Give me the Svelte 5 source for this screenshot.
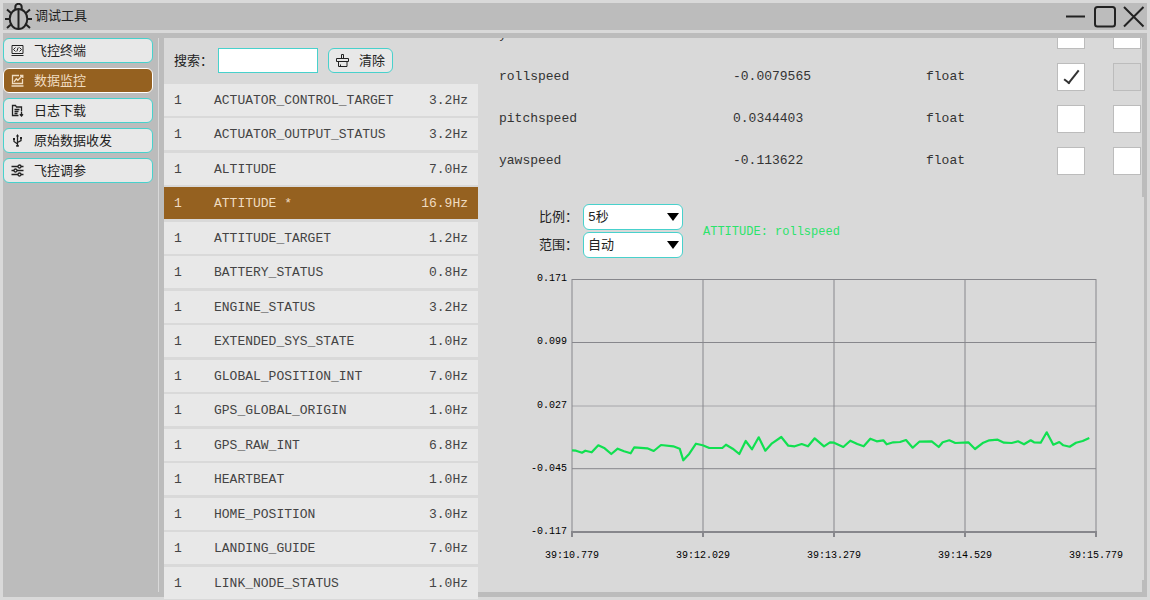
<script lang="ts">
  const tools = [
    { id: 'terminal', label: '飞控终端' },
    { id: 'monitor', label: '数据监控' },
    { id: 'log', label: '日志下载' },
    { id: 'raw', label: '原始数据收发' },
    { id: 'params', label: '飞控调参' },
  ];

  const messages = [
    { sys: 1, name: 'ACTUATOR_CONTROL_TARGET', rate: '3.2Hz' },
    { sys: 1, name: 'ACTUATOR_OUTPUT_STATUS', rate: '3.2Hz' },
    { sys: 1, name: 'ALTITUDE', rate: '7.0Hz' },
    { sys: 1, name: 'ATTITUDE *', rate: '16.9Hz' },
    { sys: 1, name: 'ATTITUDE_TARGET', rate: '1.2Hz' },
    { sys: 1, name: 'BATTERY_STATUS', rate: '0.8Hz' },
    { sys: 1, name: 'ENGINE_STATUS', rate: '3.2Hz' },
    { sys: 1, name: 'EXTENDED_SYS_STATE', rate: '1.0Hz' },
    { sys: 1, name: 'GLOBAL_POSITION_INT', rate: '7.0Hz' },
    { sys: 1, name: 'GPS_GLOBAL_ORIGIN', rate: '1.0Hz' },
    { sys: 1, name: 'GPS_RAW_INT', rate: '6.8Hz' },
    { sys: 1, name: 'HEARTBEAT', rate: '1.0Hz' },
    { sys: 1, name: 'HOME_POSITION', rate: '3.0Hz' },
    { sys: 1, name: 'LANDING_GUIDE', rate: '7.0Hz' },
    { sys: 1, name: 'LINK_NODE_STATUS', rate: '1.0Hz' },
  ];

  const yTicks = ['0.171', '0.099', '0.027', '-0.045', '-0.117'];
  const xTicks = ['39:10.779', '39:12.029', '39:13.279', '39:14.529', '39:15.779'];

  const samples = [
    [0, 171.3], [4, 171.7], [10, 173.7], [13.3, 171.7], [19.7, 173.3], [26.3, 166.3], [32.7, 169.3],
    [39.3, 175], [45.7, 169.7], [52, 172.3], [58.7, 174.3], [62.3, 168.3], [75.3, 169.3], [81.7, 172],
    [89, 166], [101.3, 167.3], [107.7, 169.7], [111.3, 181.3], [117.3, 174.7], [124, 164.7],
    [130.7, 166.3], [137.3, 169], [150.3, 169], [154, 165.7], [160.7, 169.7], [167.3, 175],
    [173.7, 162], [180, 170.3], [186.7, 158.3], [193.3, 171.7], [200, 164.3], [209.3, 158],
    [216.3, 166.7], [222.7, 167.3], [229.7, 165], [236, 167.3], [242.7, 159.3], [252, 167.3],
    [258, 163.3], [262, 163.7], [271.3, 168], [278.3, 161.7], [285.3, 165], [291.7, 167.3],
    [298.3, 159.7], [304.7, 162.3], [311.3, 161.3], [314.7, 165.3], [321.3, 163.3], [328, 163],
    [334, 161], [340.7, 168.7], [347.3, 162.7], [359.7, 162.3], [366.7, 168], [370.7, 163.3],
    [377.3, 161.3], [383.3, 164], [396.3, 163.3], [403, 170], [411.3, 163.7], [417.3, 161.3],
    [425.7, 160.7], [432, 163.7], [439.7, 164], [446, 162.3], [452, 165.3], [458.7, 161.3],
    [462, 163.3], [468.7, 163.7], [474.7, 153.3], [481.3, 165.7], [487.3, 163], [491.3, 166.3],
    [497.7, 167.7], [504, 163.7], [510.7, 162], [517.3, 159],
  ];

  let activeTool = $state('monitor');
  let selected = $state('ATTITUDE *');
  let search = $state('');
  let scale = $state('5秒');
  let range = $state('自动');

  let fields = $state([
    { name: 'yaw', value: '0.03221', type: 'float', plotA: false, plotB: false, locked: false },
    { name: 'rollspeed', value: '-0.0079565', type: 'float', plotA: true, plotB: false, locked: true },
    { name: 'pitchspeed', value: '0.0344403', type: 'float', plotA: false, plotB: false, locked: false },
    { name: 'yawspeed', value: '-0.113622', type: 'float', plotA: false, plotB: false, locked: false },
  ]);

  const visible = $derived(messages.filter((m) => m.name.includes(search.toUpperCase())));
  const line = samples.map((p) => p.join(',')).join(' ');
</script>

<div class="window">
  <header class="titlebar">
    <svg class="bug" viewBox="0 0 27 27" aria-hidden="true">
      <ellipse cx="13.5" cy="16" rx="8.8" ry="10" />
      <path d="M13.5 6v20M10.3 6.2V4a3.2 3.2 0 0 1 6.4 0v2.2M0 16h4.5M22.5 16H27M2 6.500l4.500 4M25 6.500l-4.500 4M2 25l4.500-4M25 25l-4.500-4" />
    </svg>
    <h1>调试工具</h1>
    <button class="win-btn" aria-label="最小化">
      <svg viewBox="0 0 27 27"><path d="M4 13.5h19" /></svg>
    </button>
    <button class="win-btn" aria-label="最大化">
      <svg viewBox="0 0 27 27"><rect x="4" y="4" width="20" height="19.5" rx="2.5" /></svg>
    </button>
    <button class="win-btn" aria-label="关闭">
      <svg viewBox="0 0 27 27"><path d="m4 4 19.5 19.5M23.5 4 4 23.5" /></svg>
    </button>
  </header>

  <main>
    <nav class="sidebar">
      {#each tools as tool}
        <button class="tool" class:active={tool.id === activeTool} onclick={() => (activeTool = tool.id)}>
          <svg class="icon" viewBox="0 0 13 13" aria-hidden="true">
            {#if tool.id === 'terminal'}
              <path d="M1 1.500h11v8H1zM.5 11.500h12M4.500 3.500l-2 2 2 2M8.500 3.500l2 2-2 2M7.200 3.500 5.800 7.500" />
            {:else if tool.id === 'monitor'}
              <path class="bold" d="M8 1.500H1.500v8h10V5M.5 12h12M3 7.800l2.300-3 1.500 1.500L11.500 1.500M9 1.500h2.800v2.500" />
            {:else if tool.id === 'log'}
              <path class="bold" d="M7.500 11.500H1.500v-10h3l1 1.500h5v4M3.500 5.500h5M3.500 7.500h4M3.500 9.500h3M10.500 7.500v4.500M8.800 10.300l1.700 1.700 1.500-1.700" />
            {:else if tool.id === 'raw'}
              <path class="bold" d="M6.500 1v11M6.500 10 3 7.500V5.500M6.500 8.500 10 6.500V4.500" />
              <path class="solid" d="m6.500 0 1.500 2.500H5zM2 4h2v2H2zM9 3h2v2H9zM5.200 11h2.600v1.800H5.200z" />
            {:else}
              <g class="bold">
                <path d="M.5 2.500H7M10 2.500h2.500M.5 6.500H3M6 6.500h6.500M.5 10.500H7M10 10.500h2.500" />
                <circle cx="8.5" cy="2.5" r="1.5" /><circle cx="4.5" cy="6.5" r="1.5" /><circle cx="8.5" cy="10.5" r="1.5" />
              </g>
            {/if}
          </svg>
          <span>{tool.label}</span>
        </button>
      {/each}
    </nav>

    <section class="messages">
      <div class="toolbar">
        <label for="search">搜索：</label>
        <input id="search" type="text" bind:value={search} />
        <button class="clear" onclick={() => (search = '')}>
          <svg class="icon" viewBox="0 0 13 13" aria-hidden="true">
            <path d="M5.500 4.500v-4h2v4M.5 7.500v-3h12v3zM2.500 7.500v5h8.500v-5M4.500 12.500v-2" />
          </svg>
          <span>清除</span>
        </button>
      </div>
      <ul>
        {#each visible as msg}
          <li>
            <button class="message" class:active={msg.name === selected} onclick={() => (selected = msg.name)}>
              <span>{msg.sys}</span>
              <span>{msg.name}</span>
              <span>{msg.rate}</span>
            </button>
          </li>
        {/each}
      </ul>
    </section>

    <section class="detail">
      <div class="fields">
        <table>
          <tbody>
            {#each fields as field}
              <tr>
                <td>{field.name}</td>
                <td class="value">{field.value}</td>
                <td class="type">{field.type}</td>
                <td class="check">
                  <input type="checkbox" aria-label={`${field.name} 1`} bind:checked={field.plotA} />
                </td>
                <td class="check-last">
                  <input type="checkbox" aria-label={`${field.name} 2`} disabled={field.locked} bind:checked={field.plotB} />
                </td>
              </tr>
            {/each}
          </tbody>
        </table>
      </div>

      <div class="options">
        <div class="selects">
          <label for="scale">比例：</label>
          <div class="select">
            <select id="scale" bind:value={scale}>
              <option>5秒</option>
              <option>10秒</option>
              <option>30秒</option>
            </select>
          </div>
          <label for="range">范围：</label>
          <div class="select">
            <select id="range" bind:value={range}>
              <option>自动</option>
              <option>手动</option>
            </select>
          </div>
        </div>
        <span class="legend">ATTITUDE: rollspeed</span>
      </div>

      <div class="chart">
        <div class="y-axis">
          {#each yTicks as tick}<span>{tick}</span>{/each}
        </div>
        <svg class="plot" viewBox="0 0 524 258" preserveAspectRatio="none" role="img" aria-label="ATTITUDE: rollspeed">
          {#each xTicks as _, i}
            <path class="grid" d={`M${i * 131} 0V253`} />
            <path class="axis" d={`M${i * 131} 253v5`} />
          {/each}
          <path class="grid" d="M0 .5h524M0 63.500h524M0 189.700h524" />
          <path class="grid faint" d="M0 127h524" />
          <path class="axis" d="M-1 253h526" />
          <polyline points={line} />
        </svg>
        <div class="x-axis">
          {#each xTicks as tick}<span>{tick}</span>{/each}
        </div>
      </div>
    </section>

    <div class="scrollbar"><div class="thumb"></div></div>
  </main>
</div>

<style>
  :global(body) {
    background: #d9d9d9;
    overflow: hidden;
  }

  .window {
    --panel: #d9d9d9;
    --frame: #bcbcbc;
    --item: #e8e8e8;
    --accent: #48d1cc;
    --active: #956120;
    --ink: #222;
    display: flex;
    flex-direction: column;
    gap: 3px;
    box-sizing: border-box;
    height: 100vh;
    padding: 3px;
    background: var(--panel);
    color: var(--ink);
    font: 13px/16px 'Liberation Mono', 'Noto Sans CJK SC', monospace;
  }

  button,
  input,
  select {
    box-sizing: border-box;
    margin: 0;
    color: inherit;
    font: inherit;
  }

  svg {
    display: block;
    fill: none;
    stroke: currentColor;
  }

  .titlebar {
    display: flex;
    flex: none;
    align-items: center;
    gap: 2px;
    height: 27px;
    padding-left: 2px;
    background: var(--frame);
  }

  .bug {
    width: 27px;
    height: 27px;
    stroke-width: 2;
  }

  h1 {
    flex: 1;
    margin: 0;
    padding-left: 1px;
    font: inherit;
  }

  .win-btn {
    width: 27px;
    height: 27px;
    padding: 0;
    border: 0;
    background: none;
  }

  .win-btn svg {
    stroke-width: 2;
  }

  main {
    display: flex;
    flex: 1;
    min-height: 0;
    box-sizing: border-box;
    padding: 5px 3px 5px 0;
    background: var(--frame);
  }

  .sidebar {
    display: flex;
    flex: none;
    flex-direction: column;
    gap: 5px;
    margin-right: 5px;
    padding-right: 5px;
    border-right: 1px solid var(--panel);
  }

  .tool,
  .clear {
    display: flex;
    align-items: center;
    gap: 10px;
    height: 25px;
    padding: 0 7px;
    border: 1px solid var(--accent);
    border-radius: 6px;
    background: var(--item);
  }

  .tool {
    width: 150px;
  }

  .icon {
    width: 13px;
    height: 13px;
  }

  .bold {
    stroke-width: 1.3;
  }

  .solid {
    fill: currentColor;
    stroke: none;
  }

  .tool.active,
  .message.active {
    border-color: #fff;
    background: var(--active);
    color: #f0dcc0;
  }

  .messages {
    flex: none;
    width: 314px;
    background: var(--panel);
  }

  .toolbar {
    display: flex;
    align-items: center;
    padding: 10px 10px 11px;
  }

  .toolbar input {
    width: 100px;
    height: 25px;
    margin: 0 10px 0 5px;
    border: 1px solid var(--accent);
    background: #fff;
  }

  label,
  .tool span,
  .clear span {
    padding-top: 2px;
  }

  ul {
    margin: 0;
    padding: 0;
    list-style: none;
    background: var(--panel);
  }

  li {
    margin-bottom: 2px;
  }

  li:nth-child(even) {
    margin-bottom: 3px;
  }

  .message {
    display: grid;
    grid-template-columns: 40px 1fr auto;
    align-items: center;
    width: 100%;
    height: 32px;
    padding: 2px 10px 0;
    border: 0;
    background: var(--item);
    color: #444;
    text-align: left;
  }

  .detail {
    flex: 1;
    min-width: 0;
    background: var(--panel);
  }

  .fields {
    display: flex;
    align-items: flex-end;
    box-sizing: border-box;
    height: 159px;
    padding: 0 0 15px 21px;
    overflow: hidden;
    color: #333;
  }

  table {
    width: 100%;
    border-collapse: collapse;
    table-layout: fixed;
  }

  td {
    height: 42px;
    padding: 0;
  }

  .value {
    width: 193px;
  }

  .type {
    width: 131px;
  }

  .check {
    width: 56px;
  }

  .check-last {
    width: 29px;
  }

  td input {
    display: grid;
    width: 28px;
    height: 28px;
    appearance: none;
    border: 1px solid var(--frame);
    background: #fff;
    place-items: center;
  }

  td input:disabled {
    background: #d6d6d6;
  }

  td input:checked::after {
    width: 5px;
    height: 15px;
    margin-bottom: 4px;
    border: solid #333;
    border-width: 0 2px 2px 0;
    content: '';
    transform: rotate(38deg);
  }

  .options {
    display: flex;
    align-items: center;
    gap: 20px;
    padding: 7px 0 0 61px;
  }

  .selects {
    display: grid;
    grid-template-columns: auto 100px;
    align-items: center;
    gap: 2px 5px;
  }

  .select {
    display: grid;
    align-items: center;
  }

  .select::after {
    grid-area: 1 / 1;
    justify-self: end;
    margin-right: 4px;
    border: 6px solid transparent;
    border-top: 8px solid #000;
    border-bottom: 0;
    content: '';
    pointer-events: none;
  }

  select {
    grid-area: 1 / 1;
    width: 100%;
    height: 26px;
    padding: 2px 4px 0;
    appearance: none;
    border: 1px solid var(--accent);
    border-radius: 6px;
    background: #fff;
  }

  .legend {
    padding-top: 2px;
    color: #2be36b;
    font-size: 12px;
  }

  .chart {
    display: grid;
    grid-template-columns: 44px 1fr;
    column-gap: 5px;
    padding: 21px 46px 0 45px;
    color: #000;
    font-size: 10px;
    line-height: 12px;
  }

  .y-axis {
    display: flex;
    flex-direction: column;
    justify-content: space-between;
    margin: -6px 0 -1px;
    text-align: right;
  }

  .plot {
    width: 100%;
    height: 258px;
    overflow: visible;
  }

  .grid {
    stroke: #87878c;
  }

  .faint {
    opacity: 0.6;
  }

  .axis {
    stroke: #87878c;
    stroke-width: 2;
  }

  polyline {
    stroke: #10e050;
    stroke-width: 2.2;
    stroke-linejoin: round;
  }

  .x-axis {
    display: flex;
    grid-column: 2;
    justify-content: space-between;
    margin: 13px -27px 0;
  }

  .scrollbar {
    flex: none;
    width: 2px;
    margin-bottom: 12px;
    background: var(--panel);
  }

  .thumb {
    height: 159px;
    background: var(--frame);
  }
</style>
